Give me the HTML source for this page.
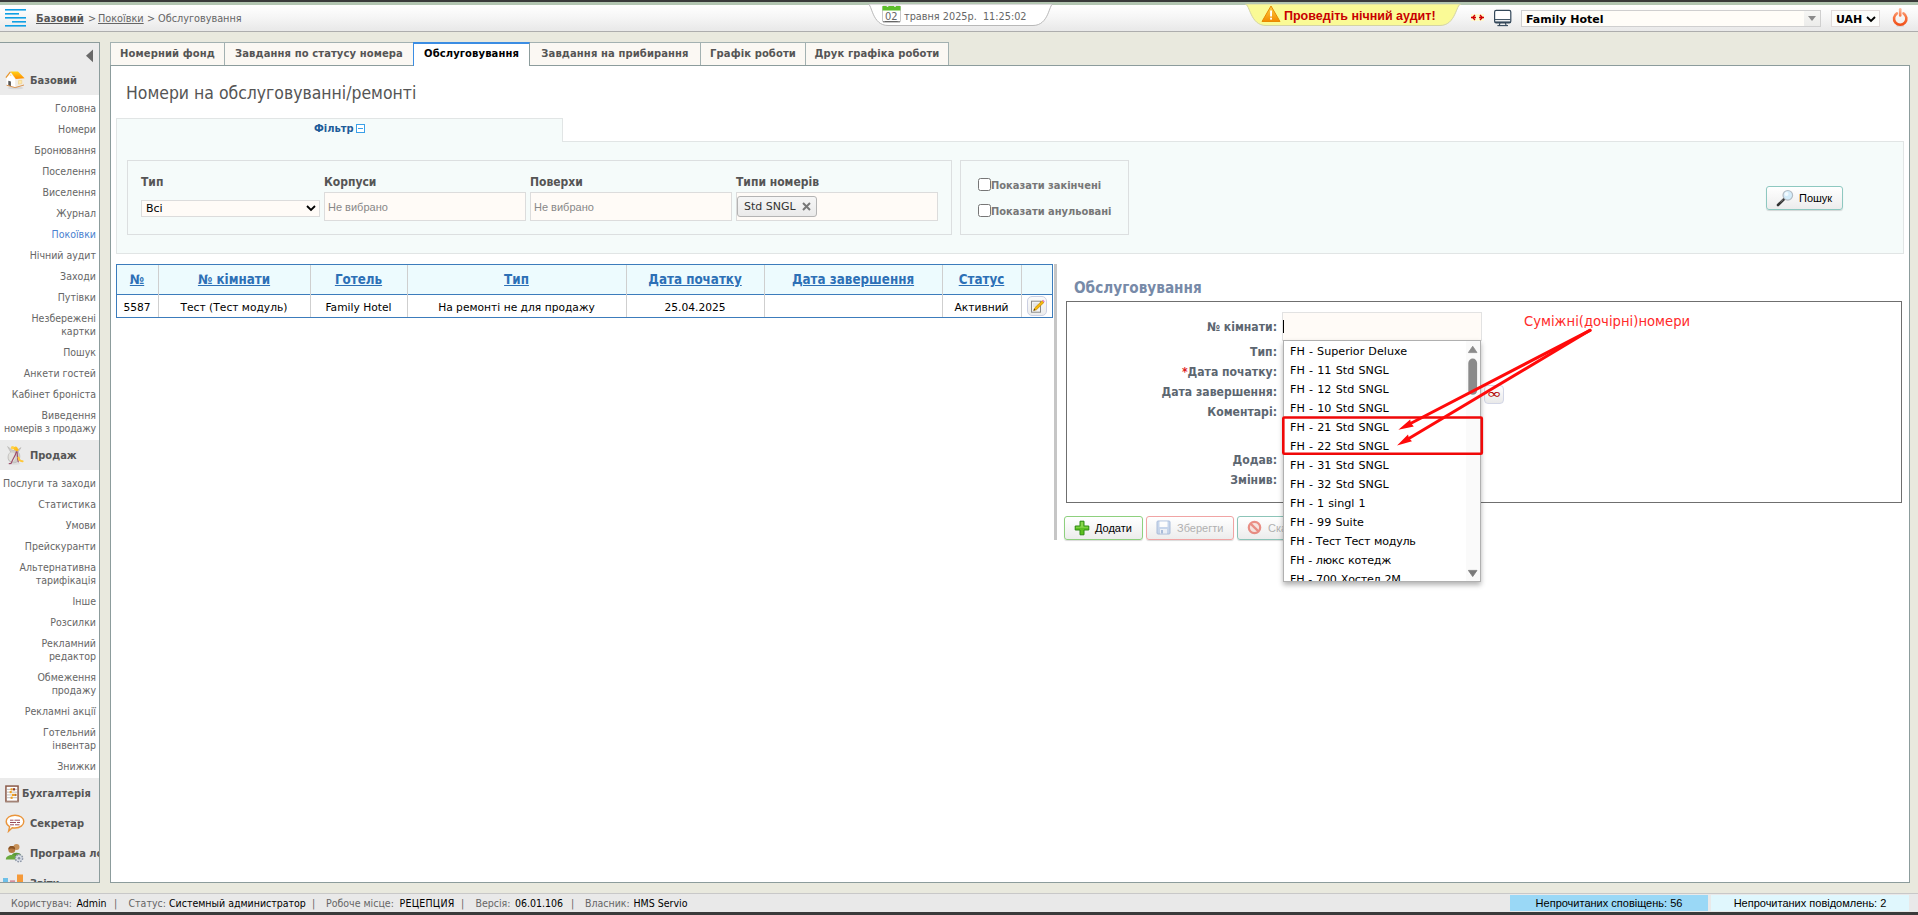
<!DOCTYPE html>
<html lang="uk">
<head>
<meta charset="utf-8">
<title>Обслуговування</title>
<style>
*{box-sizing:border-box;margin:0;padding:0}
html,body{width:1918px;height:915px;overflow:hidden}
body{position:relative;background:#e9e9de;font-family:"DejaVu Sans Condensed","Liberation Sans",sans-serif;font-size:11px;color:#555}
.abs{position:absolute}
.nw{white-space:nowrap}
.fv{font-family:"DejaVu Sans","Liberation Sans",sans-serif}
.fa{font-family:"Liberation Sans",sans-serif}
#topdark{left:0;top:0;width:1918px;height:2px;background:#3a3a3a}
#topgreen{left:0;top:2px;width:1918px;height:3px;background:#b3c6b2}
#header{left:0;top:5px;width:1918px;height:27px;background:linear-gradient(#ffffff 0%,#fdfdfd 12%,#f5f5f5 50%,#ebebeb 88%,#e9e9e9 100%);border-bottom:1px solid #adadad}
#crumbs{left:36px;top:12px;font-size:10.8px;line-height:14px;color:#666}
.cr{top:12px;font-size:10.8px;line-height:14px;color:#666}
#datepill{left:868px;top:4px;width:185px;height:22px;background:#fff;border:1px solid #b5b5b5;border-top:none;border-radius:0 0 24px 24px / 0 0 21px 21px}
#datetxt{left:904px;top:10px;font-size:10.8px;line-height:13px;color:#666}
#audit{left:1245px;top:5px;width:215px;height:21px;background:#fafa96;border-radius:0 0 28px 28px / 0 0 21px 21px;border-bottom:1px solid #cfcfa8}
#audittxt{left:1284px;top:9px;font-family:"Liberation Sans",sans-serif;font-weight:bold;font-size:12.5px;line-height:15px;color:#c80000}
#hotel{left:1521px;top:10px;width:300px;height:17px;background:#fffdf8;border:1px solid #cfcfcf;font-family:"DejaVu Sans","Liberation Sans",sans-serif;font-weight:bold;font-size:11px;line-height:17px;color:#000;padding-left:4px}
#cur{left:1831px;top:10px;width:49px;height:17px;background:#fcfcfa;border:1px solid #e0dada;font-family:"DejaVu Sans","Liberation Sans",sans-serif;font-weight:bold;font-size:11px;line-height:17px;color:#000;padding-left:4px}
#side{left:0;top:42px;width:100px;height:841px;background:#fff;border-top:1px solid #8c9c9c;border-right:1px solid #8c9c9c;border-bottom:1px solid #8c9c9c;overflow:hidden}
.sec{position:absolute;left:0;width:99px;background:#ebebeb}
.sect{position:absolute;font-weight:bold;font-size:11px;line-height:14px;color:#555;white-space:nowrap}
.mi{position:absolute;right:3px;text-align:right;font-size:10.5px;line-height:13px;color:#666;white-space:nowrap}
.tab{position:absolute;top:42px;height:23px;background:#fbf8f3;border:1px solid #a3b1b1;border-bottom:none;font-family:"DejaVu Sans","Liberation Sans",sans-serif;font-weight:bold;font-size:10px;letter-spacing:.1px;color:#555;text-align:center;line-height:22px;white-space:nowrap}
.tab.act{height:24px;background:#fff;color:#000;border-top:2px solid #3b8de3;border-left-color:#3b8de3;border-right-color:#8c9c9c;line-height:20px;z-index:3}
#content{left:110px;top:65px;width:1800px;height:818px;background:#fff;border:1px solid #8c9c9c}
#title{left:126px;top:82px;font-size:17.45px;line-height:22px;color:#555}
#ftab{left:116px;top:118px;width:447px;height:24px;background:#f5fbfa;border:1px solid #e1e5e5;border-bottom:none}
#fbody{left:116px;top:141px;width:1788px;height:113px;background:#f5fbfa;border:1px solid #e1e5e5}
#ftabfix{left:117px;top:141px;width:445px;height:1px;background:#f5fbfa}
.fs{position:absolute;border:1px solid #dcdfe0}
.lbl{position:absolute;font-weight:bold;font-size:12px;line-height:14px;color:#555;white-space:nowrap}
.inp{position:absolute;background:#fffbf7;border:1px solid #dcdcdc}
.ph{position:absolute;font-family:"Liberation Sans",sans-serif;font-size:11px;line-height:13px;color:#888;white-space:nowrap}
.cb{position:absolute;width:13px;height:13px;background:#fff;border:1px solid #767676;border-radius:2.5px}
.cbl{position:absolute;font-weight:bold;font-size:11px;line-height:13px;color:#777;white-space:nowrap}
.btn{position:absolute;height:24px;border:1px solid #9ab;border-radius:3px;background:linear-gradient(#ffffff,#f6f6f6 50%,#ececec);font-family:"Liberation Sans",sans-serif;font-size:11px;line-height:22px;color:#000;white-space:nowrap;box-shadow:0 1px 1px rgba(0,0,0,.15)}
.th{top:272px;text-align:center;font-weight:bold;font-size:13.3px;line-height:16px;color:#2d70b6;text-decoration:underline}
.td{top:301px;text-align:center;font-family:"DejaVu Sans","Liberation Sans",sans-serif;font-size:10.7px;line-height:14px;color:#000}
.flab{left:1077px;width:200px;text-align:right;font-weight:bold;font-size:12.1px;line-height:15px;color:#5c6670}
#dd{left:1283px;top:340px;width:198px;height:242px;background:#fff;border:1px solid #b0b0b0;box-shadow:0 3px 5px rgba(0,0,0,.3);overflow:hidden}
.ddi{position:absolute;left:6px;word-spacing:.6px;font-family:"DejaVu Sans","Liberation Sans",sans-serif;font-size:11.15px;line-height:19px;color:#000;white-space:nowrap}
#status{left:0;top:893px;width:1918px;height:20px;background:#e9e9e9;border-top:1px solid #c8c8c8}
#botdark{left:0;top:912px;width:1918px;height:3px;background:#3a3a3a}
.st{position:absolute;top:897px;font-size:10.5px;line-height:13px;white-space:nowrap;color:#666}
.st b{font-weight:normal;color:#000}
.sb{position:absolute;top:895px;height:16px;text-align:center;font-family:"Liberation Sans",sans-serif;font-size:11px;line-height:16px;color:#000;white-space:nowrap}
</style>
</head>
<body>
<div class="abs" id="topdark"></div><div class="abs" id="topgreen"></div><div class="abs" id="header"></div>
<svg class="abs" style="left:5px;top:9px" width="22" height="19" viewBox="0 0 22 19"><g fill="#10a0e4"><rect x="0" y="0" width="21" height="1.6"/><rect x="0" y="4" width="14" height="1.6"/><rect x="0" y="8" width="21" height="1.6"/><rect x="7" y="12" width="14" height="1.6"/><rect x="0" y="16" width="21" height="1.6"/></g></svg>
<div class="abs nw cr" style="left:36px;font-weight:bold;font-size:11.2px;color:#555;text-decoration:underline">Базовий</div>
<div class="abs nw cr" style="left:88px">&gt;</div>
<div class="abs nw cr" style="left:98px;text-decoration:underline">Покоївки</div>
<div class="abs nw cr" style="left:147px">&gt;</div>
<div class="abs nw cr" style="left:158px">Обслуговування</div>
<svg class="abs" style="left:860px;top:4px" width="200" height="24" viewBox="860 4 200 24"><path d="M868 4 C872 4 872 25.5 888 25.5 L1033 25.5 C1049 25.5 1049 4 1053 4 Z" fill="#fff" stroke="#b8b8b8" stroke-width="1"/></svg>
<svg class="abs" style="left:882px;top:5px" width="19" height="18" viewBox="0 0 19 18"><rect x=".5" y="1" width="18" height="16" rx="1" fill="#fff" stroke="#c9c9c9"/><rect x=".5" y="1" width="18" height="4.5" fill="#5cbf2a"/><rect x="1" y="16" width="17" height="1.3" fill="#8a8a8a"/><circle cx="5.5" cy="1" r="1" fill="#eee"/><circle cx="13" cy="1" r="1" fill="#eee"/></svg>
<div class="abs nw" style="left:885px;top:10px;font-size:11px;line-height:13px;color:#666;text-decoration:underline">02</div>
<div class="abs nw" id="datetxt">травня 2025р.&nbsp; 11:25:02</div>
<svg class="abs" style="left:1240px;top:4px" width="226" height="24" viewBox="1240 4 226 24"><path d="M1245 4 C1250 4 1250 25.5 1266 25.5 L1440 25.5 C1456 25.5 1456 4 1461 4 Z" fill="#fafa96" stroke="#d4d4a4" stroke-width="1"/></svg>
<svg class="abs" style="left:1261px;top:5px" width="20" height="18" viewBox="0 0 20 18"><defs><linearGradient id="wg" x1="0" y1="0" x2="0" y2="1"><stop offset="0" stop-color="#ffd34a"/><stop offset="1" stop-color="#f28a00"/></linearGradient></defs><path d="M10 1 L19 16.5 L1 16.5 Z" fill="url(#wg)" stroke="#e88a00" stroke-width="1" stroke-linejoin="round"/><rect x="9.1" y="5.5" width="1.9" height="6" fill="#fff"/><rect x="9.1" y="12.7" width="1.9" height="1.9" fill="#fff"/></svg>
<div class="abs nw" id="audittxt">Проведіть нічний аудит!</div>
<div class="abs" style="left:1471px;top:14px;width:13px;height:7px;background:#fdfad0"></div>
<svg class="abs" style="left:1470px;top:13px" width="15" height="9" viewBox="0 0 15 9"><g stroke="#d00000" stroke-width="1.3" fill="none"><path d="M1 4.5 H6 M5 2 L2.6 4.5 L5 7"/><path d="M14 4.5 H9 M10 2 L12.4 4.5 L10 7"/></g></svg>
<svg class="abs" style="left:1493px;top:9px" width="20" height="18" viewBox="0 0 20 18"><rect x="1.6" y="1.4" width="16.2" height="12.4" rx="1.6" fill="#fff" stroke="#34485a" stroke-width="1.2"/><path d="M2 10.6 H17.4" stroke="#34485a" stroke-width="1"/><rect x="2" y="12.4" width="15.4" height="1.6" fill="#34485a"/><path d="M7 14 L6.3 16.4 M12.4 14 L13.1 16.4" stroke="#34485a" stroke-width="1.1"/><path d="M4.4 16.6 H15" stroke="#34485a" stroke-width="1.1"/></svg>
<div class="abs nw" id="hotel">Family Hotel</div>
<div class="abs" style="left:1804px;top:11px;width:16px;height:15px;background:linear-gradient(#f6f6f4,#ececea)"></div>
<svg class="abs" style="left:1807px;top:15px" width="10" height="7" viewBox="0 0 10 7"><path d="M1 1 H9 L5 6 Z" fill="#8a8a8a"/></svg>
<div class="abs nw" id="cur">UAH</div>
<svg class="abs" style="left:1866px;top:16px" width="10" height="7" viewBox="0 0 10 7"><path d="M1 1 L5 5 L9 1" fill="none" stroke="#000" stroke-width="1.9"/></svg>
<svg class="abs" style="left:1892px;top:7px" width="17" height="21" viewBox="0 0 17 21"><defs><linearGradient id="pg" gradientUnits="userSpaceOnUse" x1="0" y1="1" x2="0" y2="19"><stop offset="0" stop-color="#ffc0a4"/><stop offset=".45" stop-color="#f87a48"/><stop offset="1" stop-color="#f04c14"/></linearGradient></defs><ellipse cx="8.2" cy="19" rx="4" ry=".9" fill="#d8d8d8"/><path d="M4.9 6.3 A6.2 6.2 0 1 0 11.5 6.3" fill="none" stroke="url(#pg)" stroke-width="2.6" stroke-linecap="round"/><path d="M8.2 2.2 V8.4" stroke="url(#pg)" stroke-width="2.6" stroke-linecap="round"/></svg>
<div class="abs" id="side">
<div class="sec" style="top:0;height:52px"></div>
<svg class="abs" style="left:85px;top:6px" width="9" height="14" viewBox="0 0 9 14"><path d="M8 0.4 V13.2 L1 6.8 Z" fill="#696969"/></svg>
<svg class="abs" style="left:5px;top:27px" width="21" height="20" viewBox="0 0 21 20"><defs><linearGradient id="rg" x1="0" y1="0" x2="0" y2="1"><stop offset="0" stop-color="#ffd21a"/><stop offset="1" stop-color="#ff8a00"/></linearGradient></defs><ellipse cx="10.5" cy="18" rx="8" ry="1.3" fill="#d8d8d8"/><path d="M10.2 9 L19 8.3 V15 L10.2 17.6 Z" fill="#f1ece4"/><path d="M5.6 2.8 L1.5 8 V15.2 L10.2 17.6 V9 Z" fill="#fff"/><path d="M5.4 1.6 H13 L19.6 8.2 L10.8 9 Z" fill="url(#rg)"/><path d="M5.4 1.8 L0.9 7.6" stroke="#e8962c" stroke-width="1.2" fill="none"/><path d="M3.3 10.8 L5.9 11.4 V16.3 L3.3 15.6 Z" fill="#555"/><path d="M13.5 10.6 L16.8 10.3 V13.6 L13.5 14.2 Z" fill="#ffe9a8" stroke="#e8c878" stroke-width=".5"/><path d="M1.5 15.2 L10.2 17.6 L19 15" stroke="#d88a40" stroke-width=".9" fill="none"/><path d="M4.6 5.6 L5.6 4.2 L6.6 5.8 Z" fill="#ffd86a"/></svg>
<div class="sect" style="left:30px;top:31px">Базовий</div>
<div class="mi" style="top:59px">Головна</div>
<div class="mi" style="top:80px">Номери</div>
<div class="mi" style="top:101px">Бронювання</div>
<div class="mi" style="top:122px">Поселення</div>
<div class="mi" style="top:143px">Виселення</div>
<div class="mi" style="top:164px">Журнал</div>
<div class="mi" style="top:185px;color:#4a7fd0">Покоївки</div>
<div class="mi" style="top:206px">Нічний аудит</div>
<div class="mi" style="top:227px">Заходи</div>
<div class="mi" style="top:248px">Путівки</div>
<div class="mi" style="top:269px">Незбережені<br>картки</div>
<div class="mi" style="top:303px">Пошук</div>
<div class="mi" style="top:324px">Анкети гостей</div>
<div class="mi" style="top:345px">Кабінет броніста</div>
<div class="mi" style="top:366px">Виведення<br><span style="letter-spacing:-.15px">номерів з продажу</span></div>
<div class="sec" style="top:397px;height:30px"></div>
<svg class="abs" style="left:6px;top:402px" width="19" height="21" viewBox="0 0 19 21"><ellipse cx="8" cy="18.6" rx="6.5" ry="1.2" fill="#dedede"/><path d="M1.6 1.6 L6.4 5.4 L10.6 5.6 L15 2.6 L12.2 7 C15 9.5 14.6 17.6 7.8 17.8 C0.6 17.6 0.8 9.6 4.6 7 Z" fill="#cfcdca" stroke="#b2b0ac" stroke-width=".6"/><ellipse cx="6" cy="11.8" rx="3.4" ry="4.4" fill="#e6e5e2" opacity=".85"/><circle cx="6.6" cy="2.8" r="1.8" fill="#ffd24a"/><circle cx="9.6" cy="3.4" r="2" fill="#ffc423"/><circle cx="11" cy="4.8" r="1.5" fill="#ffb81a"/><path d="M10.4 6.2 C10 9.5 8 12.5 6.6 15 L5 18.4 L2.8 18.8 M11 6.4 C11.6 9.6 11 13.5 12.4 17.4" stroke="#9c4a68" stroke-width="1.1" fill="none"/><path d="M12.4 12.4 C12.8 14.6 13.4 16.4 16.6 16.2" stroke="#ffc83a" stroke-width="2" fill="none" stroke-linecap="round"/></svg>
<div class="sect" style="left:30px;top:406px">Продаж</div>
<div class="mi" style="top:434px">Послуги та заходи</div>
<div class="mi" style="top:455px">Статистика</div>
<div class="mi" style="top:476px">Умови</div>
<div class="mi" style="top:497px">Прейскуранти</div>
<div class="mi" style="top:518px">Альтернативна<br>тарифікація</div>
<div class="mi" style="top:552px">Інше</div>
<div class="mi" style="top:573px">Розсилки</div>
<div class="mi" style="top:594px">Рекламний<br>редактор</div>
<div class="mi" style="top:628px">Обмеження<br>продажу</div>
<div class="mi" style="top:662px">Рекламні акції</div>
<div class="mi" style="top:683px">Готельний<br>інвентар</div>
<div class="mi" style="top:717px">Знижки</div>
<div class="sec" style="top:735px;height:120px"></div>
<svg class="abs" style="left:4.5px;top:741.5px" width="14" height="18" viewBox="0 0 15 19"><rect x="1" y="1" width="13" height="16.5" fill="#fff" stroke="#8a5a48" stroke-width="1.6"/><g stroke="#999" stroke-width=".7"><path d="M2 4.5H13M2 7.5H13M2 10.5H13M2 13.5H13"/></g><g fill="#f0a020"><rect x="6" y="3.3" width="2.2" height="2.4"/><rect x="8.6" y="3.3" width="2.2" height="2.4" fill="#8a3a2a"/><rect x="5" y="6.3" width="2.2" height="2.4"/><rect x="7.5" y="9.3" width="2.2" height="2.4"/><rect x="10" y="9.3" width="2.2" height="2.4" fill="#c87818"/><rect x="6" y="12.3" width="2.2" height="2.4"/></g><rect x="0.5" y="17.5" width="14" height="1.2" fill="#b8a8a0"/></svg>
<div class="sect" style="left:22px;top:744px">Бухгалтерія</div>
<svg class="abs" style="left:5px;top:771px" width="20" height="19" viewBox="0 0 20 19"><path d="M10 1.2 C15 1.2 18.8 4 18.8 7.6 C18.8 11.2 15 14 10 14 C9 14 8 13.9 7.2 13.7 L3.6 17.2 L4.6 12.6 C2.4 11.4 1.2 9.6 1.2 7.6 C1.2 4 5 1.2 10 1.2 Z" fill="#fff" stroke="#ea953c" stroke-width="1.4"/><g stroke="#9a4a5a" stroke-width="1"><path d="M5 6.2H8.5M9.5 6.2H15M5 8.5H11M12 8.5H15M5 10.8H9M10 10.8H14.5"/></g></svg>
<div class="sect" style="left:30px;top:774px">Секретар</div>
<svg class="abs" style="left:5px;top:800px" width="20" height="20" viewBox="0 0 20 20"><circle cx="11.5" cy="4" r="3" fill="#c8925a"/><path d="M6.5 13 C6.5 8.5 16.5 8.5 16.5 13 Z" fill="#5a9a3a"/><circle cx="6.8" cy="6.5" r="3.5" fill="#b87a42"/><path d="M6.8 3 C4 3 3.3 5 3.6 6.6 C5 5.2 8 5 10 6.6 C10.3 5 9.6 3 6.8 3Z" fill="#8a5424"/><path d="M0.8 16.5 C0.8 10.5 12.8 10.5 12.8 16.5 Z" fill="#6aaa3e"/><circle cx="14" cy="15.2" r="3.6" fill="#d8dde6" stroke="#8a93a4" stroke-width="1.5" stroke-dasharray="1.6 1.2"/><circle cx="14" cy="15.2" r="1.3" fill="#8a93a4"/></svg>
<div class="sect" style="left:30px;top:804px">Програма лояльності</div>
<svg class="abs" style="left:3px;top:831px" width="21" height="12" viewBox="0 0 21 12"><rect x="0" y="4" width="5" height="8" fill="#6ec0e8"/><rect x="7" y="6.3" width="5" height="6" fill="#d8909a"/><rect x="14" y="0.5" width="6" height="12" fill="#f59a3a"/></svg>
<div class="sect" style="left:30px;top:834px">Звіти</div>
</div>
<div class="abs" id="content"></div>
<div class="tab" style="left:110px;width:115px">Номерний фонд</div>
<div class="tab" style="left:224px;width:190px">Завдання по статусу номера</div>
<div class="tab act" style="left:413px;width:117px">Обслуговування</div>
<div class="tab" style="left:529px;width:172px">Завдання на прибирання</div>
<div class="tab" style="left:700px;width:106px">Графік роботи</div>
<div class="tab" style="left:805px;width:144px">Друк графіка роботи</div>
<div class="abs nw" id="title">Номери на обслуговуванні/ремонті</div>
<div class="abs" id="fbody"></div><div class="abs" id="ftab"></div><div class="abs" id="ftabfix"></div>
<div class="abs nw" style="left:314px;top:122px;font-weight:bold;font-size:11px;line-height:14px;color:#1d5c99">Фільтр</div>
<svg class="abs" style="left:356px;top:124px" width="9" height="9" viewBox="0 0 9 9"><rect x=".5" y=".5" width="8" height="8" fill="#fff" stroke="#3aa0e8"/><rect x="2" y="4" width="5" height="1" fill="#3aa0e8"/></svg>
<div class="fs" style="left:127px;top:160px;width:825px;height:75px"></div>
<div class="fs" style="left:960px;top:160px;width:169px;height:75px"></div>
<div class="lbl" style="left:141px;top:175px">Тип</div>
<div class="lbl" style="left:324px;top:175px">Корпуси</div>
<div class="lbl" style="left:530px;top:175px">Поверхи</div>
<div class="lbl" style="left:736px;top:175px">Типи номерів</div>
<div class="inp" style="left:141px;top:200px;width:179px;height:17px"></div>
<div class="abs nw fv" style="left:146px;top:202px;font-size:11px;line-height:14px;color:#000">Всі</div>
<svg class="abs" style="left:306px;top:205px" width="10" height="7" viewBox="0 0 10 7"><path d="M1 1 L5 5 L9 1" fill="none" stroke="#000" stroke-width="1.8"/></svg>
<div class="inp" style="left:324px;top:192px;width:202px;height:29px"></div>
<div class="inp" style="left:530px;top:192px;width:202px;height:29px"></div>
<div class="inp" style="left:736px;top:192px;width:202px;height:29px"></div>
<div class="ph" style="left:328px;top:201px">Не вибрано</div>
<div class="ph" style="left:534px;top:201px">Не вибрано</div>
<div class="abs nw fv" style="left:737px;top:196px;width:80px;height:21px;border:1px solid #b4b4b4;border-radius:3px;background:linear-gradient(#f6f6f6,#eaeaea);font-size:11px;line-height:20px;color:#333;padding-left:6px">Std SNGL</div>
<svg class="abs" style="left:802px;top:202px" width="9" height="9" viewBox="0 0 9 9"><path d="M1 1 L8 8 M8 1 L1 8" stroke="#777" stroke-width="2"/></svg>
<div class="cb" style="left:978px;top:178px"></div><div class="cbl" style="left:991px;top:179px">Показати закінчені</div>
<div class="cb" style="left:978px;top:204px"></div><div class="cbl" style="left:991px;top:205px">Показати анульовані</div>
<div class="btn" style="left:1766px;top:186px;width:77px;border-color:#8ec8c0;padding-left:32px">Пошук</div>
<svg class="abs" style="left:1776px;top:189px" width="18" height="18" viewBox="0 0 18 18"><path d="M8.6 9.6 L2 16" stroke="#333" stroke-width="2.6" stroke-linecap="round"/><path d="M7.2 10.4 L4.5 13" stroke="#888" stroke-width="1" /><circle cx="11.8" cy="6.3" r="4.8" fill="#d4ecfa" stroke="#b4bcc4" stroke-width="1.2"/><circle cx="10.5" cy="5" r="2" fill="#f2faff"/></svg>
<div class="abs" style="left:116px;top:264px;width:937px;height:54px;border:1px solid #3c7cbc;background:#fff"></div>
<div class="abs" style="left:117px;top:265px;width:935px;height:30px;background:#edfbfe;border-bottom:1px solid #3c7cbc"></div>
<div class="abs" style="left:158px;top:265px;width:1px;height:52px;background:#cfcfcf"></div>
<div class="abs" style="left:310px;top:265px;width:1px;height:52px;background:#cfcfcf"></div>
<div class="abs" style="left:407px;top:265px;width:1px;height:52px;background:#cfcfcf"></div>
<div class="abs" style="left:626px;top:265px;width:1px;height:52px;background:#cfcfcf"></div>
<div class="abs" style="left:764px;top:265px;width:1px;height:52px;background:#cfcfcf"></div>
<div class="abs" style="left:942px;top:265px;width:1px;height:52px;background:#cfcfcf"></div>
<div class="abs" style="left:1021px;top:265px;width:1px;height:52px;background:#cfcfcf"></div>
<div class="abs nw th" style="left:116px;width:42px">№</div>
<div class="abs nw td" style="left:116px;width:42px">5587</div>
<div class="abs nw th" style="left:158px;width:152px">№ кімнати</div>
<div class="abs nw td" style="left:158px;width:152px">Тест (Тест модуль)</div>
<div class="abs nw th" style="left:310px;width:97px">Готель</div>
<div class="abs nw td" style="left:310px;width:97px">Family Hotel</div>
<div class="abs nw th" style="left:407px;width:219px">Тип</div>
<div class="abs nw td" style="left:407px;width:219px">На ремонті не для продажу</div>
<div class="abs nw th" style="left:626px;width:138px">Дата початку</div>
<div class="abs nw td" style="left:626px;width:138px">25.04.2025</div>
<div class="abs nw th" style="left:764px;width:178px">Дата завершення</div>
<div class="abs nw th" style="left:942px;width:79px">Статус</div>
<div class="abs nw td" style="left:942px;width:79px">Активний</div>
<div class="abs" style="left:1027px;top:296px;width:20px;height:20px;border:1px solid #ccd0e2;border-radius:5px;background:linear-gradient(#fbfbfb,#ececec)"></div>
<svg class="abs" style="left:1030px;top:299px" width="16" height="15" viewBox="0 0 16 15"><rect x="1.5" y="2.2" width="9" height="11" fill="#f4f4f4" stroke="#8a8a8a"/><path d="M3 5H8M3 7H7" stroke="#d0d0d0" stroke-width=".8"/><path d="M3.6 11.6 L4.6 9 L12.2 1.6 L14 3.4 L6.4 10.8 Z" fill="#f6b80a" stroke="#b07800" stroke-width=".6"/><path d="M12.2 1.6 L13.2 0.8 L14.8 2.4 L14 3.4 Z" fill="#e878d0"/><path d="M3.6 11.6 L4.2 10 L5.4 11 Z" fill="#222"/></svg>
<div class="abs" style="left:1053.5px;top:264px;width:3px;height:276px;background:#c6c6c6"></div>
<div class="abs nw" style="left:1074px;top:279px;font-weight:bold;font-size:15.2px;line-height:19px;color:#778aa8">Обслуговування</div>
<div class="abs" style="left:1066px;top:301px;width:836px;height:202px;border:1px solid #6f6f6f;background:#fff"></div>
<div class="abs nw flab" style="top:320px">№ кімнати:</div>
<div class="abs nw flab" style="top:345px">Тип:</div>
<div class="abs nw flab" style="top:365px"><span style="color:#e02020">*</span>Дата початку:</div>
<div class="abs nw flab" style="top:385px">Дата завершення:</div>
<div class="abs nw flab" style="top:405px">Коментарі:</div>
<div class="abs nw flab" style="top:453px">Додав:</div>
<div class="abs nw flab" style="top:473px">Змінив:</div>
<div class="inp" style="left:1282px;top:312px;width:200px;height:29px;border-color:#e2e2e2"></div>
<div class="abs" style="left:1283px;top:320px;width:1px;height:13px;background:#000"></div>
<div class="abs" style="left:1484px;top:385px;width:20px;height:19px;border:1px solid #d2d6e6;border-radius:4px;background:linear-gradient(#ffffff,#e9e9e9)"></div>
<div class="abs nw fv" style="left:1484px;top:383px;width:20px;text-align:center;font-size:18px;line-height:22px;color:#b00000;transform:scaleY(.72)">∞</div>
<div class="btn" style="left:1064px;top:516px;width:79px;border-color:#8ed07e;padding-left:30px">Додати</div>
<svg class="abs" style="left:1074px;top:520px" width="16" height="16" viewBox="0 0 16 16"><path d="M6 1.2h4v4.8h4.8v4h-4.8v4.8H6v-4.8H1.2V6H6z" fill="#5cc020" stroke="#2e8a12" stroke-width="1" stroke-linejoin="round"/><path d="M6.8 2h2.4v4.8H14v1H2V6.8h4.8z" fill="#9be060" opacity=".7"/></svg>
<div class="btn" style="left:1146px;top:516px;width:88px;border-color:#f0a4a4;padding-left:30px;color:#b0b0b0">Зберегти</div>
<svg class="abs" style="left:1156px;top:520px;opacity:.6" width="15" height="15" viewBox="0 0 15 15"><rect x="1" y="1" width="13" height="13" rx="1" fill="#a8c0e4" stroke="#7a98c8"/><rect x="3.5" y="1.5" width="8" height="5.5" fill="#fff"/><rect x="4" y="9" width="7" height="4.5" fill="#e8eef8"/><rect x="5" y="10" width="2" height="3.5" fill="#7a98c8"/></svg>
<div class="btn" style="left:1237px;top:516px;width:93px;border-color:#8cc4b8;padding-left:30px;color:#b0b0b0">Скасувати</div>
<svg class="abs" style="left:1247px;top:520px;opacity:.6" width="15" height="15" viewBox="0 0 15 15"><circle cx="7.5" cy="7.5" r="5.7" fill="#f6d8d0" stroke="#e04a3a" stroke-width="2.2"/><path d="M3.6 3.6 L11.4 11.4" stroke="#e04a3a" stroke-width="2.2"/></svg>
<div class="abs" id="dd">
<div class="ddi" style="top:1px">FH - Superior Deluxe</div>
<div class="ddi" style="top:20px;letter-spacing:.03px">FH - 11 Std SNGL</div>
<div class="ddi" style="top:39px;letter-spacing:.03px">FH - 12 Std SNGL</div>
<div class="ddi" style="top:58px;letter-spacing:.03px">FH - 10 Std SNGL</div>
<div class="ddi" style="top:77px;letter-spacing:.03px">FH - 21 Std SNGL</div>
<div class="ddi" style="top:96px;letter-spacing:.03px">FH - 22 Std SNGL</div>
<div class="ddi" style="top:115px;letter-spacing:.03px">FH - 31 Std SNGL</div>
<div class="ddi" style="top:134px;letter-spacing:.03px">FH - 32 Std SNGL</div>
<div class="ddi" style="top:153px">FH - 1 singl 1</div>
<div class="ddi" style="top:172px">FH - 99 Suite</div>
<div class="ddi" style="top:191px;letter-spacing:-.26px">FH - Тест Тест модуль</div>
<div class="ddi" style="top:210px;letter-spacing:-.26px">FH - люкс котедж</div>
<div class="ddi" style="top:229px;letter-spacing:-.2px">FH - 700 Хостел 2M</div>
<div class="abs" style="left:182px;top:0;width:14px;height:240px;background:#fafafa"></div>
<svg class="abs" style="left:182px;top:0" width="14" height="240" viewBox="0 0 14 240"><path d="M2.4 11.6 L6.7 5.2 L11 11.6 Z" fill="#8a8a8a" stroke="#8a8a8a" stroke-width=".8" stroke-linejoin="round"/><rect x="2.3" y="17.6" width="8.8" height="36.2" rx="4.4" fill="#8b8b8b"/><path d="M2.4 229.4 L11 229.4 L6.7 235.6 Z" fill="#7a7a7a" stroke="#7a7a7a" stroke-width=".8" stroke-linejoin="round"/></svg>
</div>
<svg class="abs" style="left:1270px;top:300px" width="440" height="170" viewBox="1270 300 440 170"><rect x="1283.3" y="417.5" width="198.5" height="36.2" rx="1" fill="none" stroke="#f00808" stroke-width="2.6"/><g stroke="#ff0a0a" stroke-width="3" fill="none" stroke-linecap="round"><path d="M1590 330.3 L1409.5 424"/><path d="M1590 330.3 L1408 439"/></g><g fill="#ff0a0a"><path d="M1398.4 429.8 L1410.2 419.4 L1411 423.2 L1413.8 426.4 Z"/><path d="M1397 445.5 L1408 434.4 L1409 438.3 L1412 441.2 Z"/></g></svg>
<div class="abs nw fv" style="left:1524px;top:313px;font-size:13.2px;line-height:17px;color:#ff2a2a">Суміжні(дочірні)номери</div>
<div class="abs" id="status"></div><div class="abs" id="botdark"></div>
<div class="st" style="left:11px">Користувач:</div>
<div class="st" style="left:76.5px;color:#000">Admin</div>
<div class="st" style="left:114px">|</div>
<div class="st" style="left:128.5px">Статус:</div>
<div class="st" style="left:169px;color:#000">Системный администратор</div>
<div class="st" style="left:312px">|</div>
<div class="st" style="left:326px">Робоче місце:</div>
<div class="st" style="left:399.5px;color:#000;letter-spacing:.25px">РЕЦЕПЦИЯ</div>
<div class="st" style="left:461px">|</div>
<div class="st" style="left:475.5px">Версія:</div>
<div class="st" style="left:515px;color:#000">06.01.106</div>
<div class="st" style="left:571px">|</div>
<div class="st" style="left:585px">Власник:</div>
<div class="st" style="left:633.5px;color:#000">HMS Servio</div>
<div class="sb" style="left:1510px;width:198px;background:#9ad8f6">Непрочитаних сповіщень: 56</div>
<div class="sb" style="left:1711px;width:198px;background:#e0f7fd">Непрочитаних повідомлень: 2</div>
</body>
</html>
